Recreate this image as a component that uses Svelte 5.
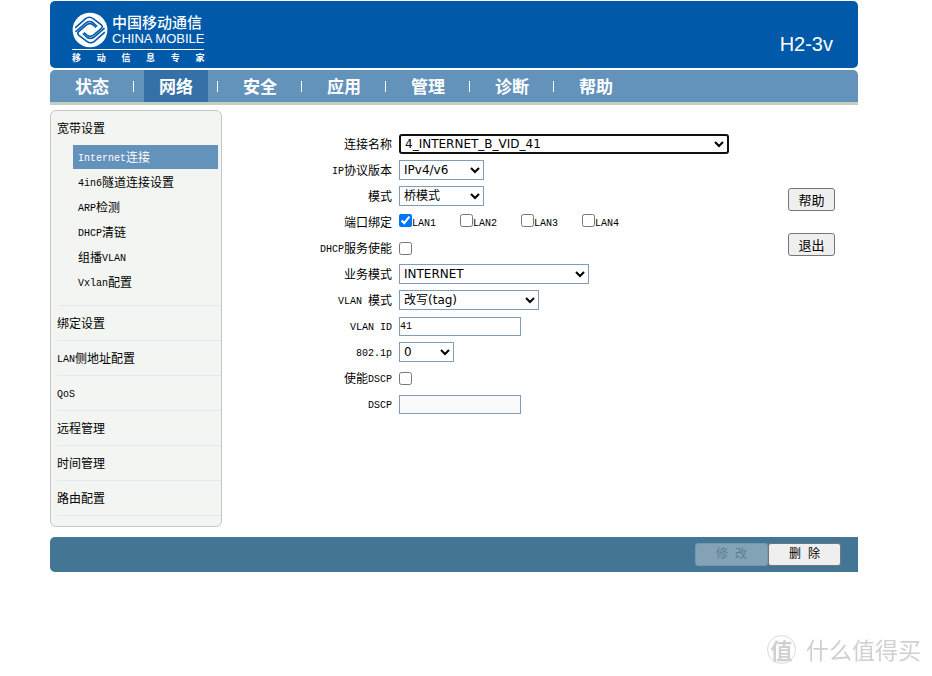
<script lang="ts">
  const tabs = ["状态", "网络", "安全", "应用", "管理", "诊断", "帮助"];
  let activeTab = $state("网络");

  const links = ["Internet连接", "4in6隧道连接设置", "ARP检测", "DHCP清链", "组播VLAN", "Vxlan配置"];
  let activeLink = $state("Internet连接");

  const sections = ["绑定设置", "LAN侧地址配置", "QoS", "远程管理", "时间管理", "路由配置"];

  let ports = $state([
    { name: "LAN1", bound: true },
    { name: "LAN2", bound: false },
    { name: "LAN3", bound: false },
    { name: "LAN4", bound: false },
  ]);
  let dhcp = $state(false);
  let dscpEnabled = $state(false);
  let vlanId = $state("41");

  // latin runs are set in the half width face
  const split = (value: string) => value.match(/[\x20-\x7e]+|[^\x20-\x7e]+/g) ?? [];
  const isLatin = (value: string) => /^[\x20-\x7e]/.test(value);
</script>

{#snippet mixed(value: string)}{#each split(value) as part}{#if isLatin(part)}<span class="latin">{part}</span>{:else}{part}{/if}{/each}{/snippet}

{#snippet wave()}
  <path d="M10 50 43 21Q55 12 67 21L93 41Q99 47 93 52L68 73Q57 81 47 73L38 65" />
  <path d="M11 63 45 34Q56 26 67 34L80 46" />
{/snippet}

<div class="page">
  <header>
    <div class="logo">
      <svg class="emblem" viewBox="0 0 114 114" aria-hidden="true">
        <circle cx="57" cy="57" r="55" fill="#fff" />
        <g fill="none" stroke="#0059a9" stroke-width="5">
          {@render wave()}
          <g transform="rotate(180 57 57)">
            {@render wave()}
          </g>
        </g>
      </svg>
      <div class="brand">
        <strong>中国移动通信</strong>
        <span>CHINA MOBILE</span>
      </div>
      <div class="slogan">
        {#each "移动信息专家" as char}<span>{char}</span>{/each}
      </div>
    </div>
    <div class="model">H2-3v</div>
  </header>

  <nav class="tabs">
    {#each tabs as tab}
      <a href="#{tab}" class:active={tab === activeTab} onclick={() => (activeTab = tab)}>{tab}</a>
    {/each}
  </nav>

  <div class="content">
    <aside class="menu">
      <h2>宽带设置</h2>
      <ul>
        {#each links as link}
          <li>
            <a href="#{link}" class:active={link === activeLink} onclick={() => (activeLink = link)}>{@render mixed(link)}</a>
          </li>
        {/each}
      </ul>
      {#each sections as section}
        <a class="section" href="#{section}">{@render mixed(section)}</a>
      {/each}
    </aside>

    <form>
      <label for="connection">连接名称</label>
      <select id="connection" class="current">
        <option>4_INTERNET_B_VID_41</option>
      </select>

      <label for="ip">{@render mixed("IP协议版本")}</label>
      <select id="ip" class="small">
        <option>IPv4/v6</option>
      </select>

      <label for="mode">模式</label>
      <select id="mode" class="small">
        <option>桥模式</option>
      </select>

      <span class="label">端口绑定</span>
      <div class="ports">
        {#each ports as port}
          <label><input type="checkbox" bind:checked={port.bound} /><span class="latin">{port.name}</span></label>
        {/each}
      </div>

      <label for="dhcp">{@render mixed("DHCP服务使能")}</label>
      <input id="dhcp" type="checkbox" bind:checked={dhcp} />

      <label for="service">业务模式</label>
      <select id="service" class="large">
        <option>INTERNET</option>
      </select>

      <label for="vlan-mode">{@render mixed("VLAN 模式")}</label>
      <select id="vlan-mode" class="medium">
        <option>改写(tag)</option>
      </select>

      <label for="vlan-id">{@render mixed("VLAN ID")}</label>
      <input id="vlan-id" type="text" bind:value={vlanId} />

      <label for="priority">{@render mixed("802.1p")}</label>
      <select id="priority" class="tiny">
        <option>0</option>
      </select>

      <label for="dscp-enabled">{@render mixed("使能DSCP")}</label>
      <input id="dscp-enabled" type="checkbox" bind:checked={dscpEnabled} />

      <label for="dscp">{@render mixed("DSCP")}</label>
      <input id="dscp" type="text" disabled={!dscpEnabled} />
    </form>

    <div class="side">
      <button type="button">帮助</button>
      <button type="button">退出</button>
    </div>
  </div>

  <footer>
    <button type="button" disabled>修 改</button>
    <button type="button">删 除</button>
  </footer>
</div>

<div class="watermark">
  <span class="seal">值</span>
  <span>什么值得买</span>
</div>

<style>
  :global(body) {
    background: #fff;
    color: #000;
    font: 12px/16px "Noto Sans CJK SC", sans-serif;
  }

  a {
    color: inherit;
    text-decoration: none;
  }

  .page {
    margin: 0 74px 0 50px;
    padding-top: 1px;
  }

  .latin {
    font-family: "Liberation Mono", monospace;
    font-size: 10px;
    line-height: 12px;
    vertical-align: 1px;
    white-space: pre;
  }

  header {
    display: flex;
    justify-content: space-between;
    height: 67px;
    border-radius: 5px;
    background: #0059a9;
    color: #fff;
  }

  .logo {
    display: grid;
    grid-template-columns: 36px auto;
    grid-template-rows: 36px 16px;
    column-gap: 4px;
    align-content: start;
    margin: 11px 0 0 22px;
    width: 131px;
  }

  .emblem {
    width: 36px;
    height: 36px;
  }

  .brand {
    display: flex;
    flex-direction: column;
    justify-content: center;
    font-family: "Liberation Sans", "Noto Sans CJK SC", sans-serif;
    white-space: nowrap;
  }

  .brand strong {
    font-size: 15px;
    font-weight: 500;
    line-height: 17px;
  }

  .brand span {
    font-size: 13px;
    line-height: 15px;
  }

  .slogan {
    grid-column: 1 / 3;
    display: flex;
    justify-content: space-between;
    border-top: 1px solid #fff;
    margin-top: 1px;
    font-size: 9px;
    font-weight: bold;
    line-height: 16px;
  }

  .model {
    margin: 31px 25px 0 0;
    font-family: "Liberation Sans", sans-serif;
    font-size: 20px;
    line-height: 24px;
  }

  .tabs {
    display: flex;
    gap: 20px;
    height: 32px;
    margin-top: 2px;
    padding-left: 10px;
    border-bottom: 3px solid #c5cdc5;
    border-radius: 5px 5px 0 0;
    background: #6392bb;
    color: #fff;
  }

  .tabs a {
    position: relative;
    width: 64px;
    font-size: 17px;
    font-weight: bold;
    line-height: 32px;
    text-align: center;
  }

  .tabs a.active {
    background: #3570a6;
  }

  .tabs a:not(:last-child)::after {
    content: "";
    position: absolute;
    top: 11px;
    right: -10px;
    width: 1px;
    height: 11px;
    background: #fff;
  }

  .content {
    display: flex;
    align-items: flex-start;
    margin-top: 5px;
  }

  .menu {
    box-sizing: border-box;
    flex: none;
    width: 172px;
    padding: 9px 0 10px 6px;
    border: 1px solid #c6c6c6;
    border-radius: 6px;
    background: #f3f5f2;
  }

  .menu h2 {
    margin: 0;
    font-size: 12px;
    font-weight: normal;
    line-height: 16px;
  }

  .menu ul {
    margin: 0;
    padding: 9px 3px 10px 16px;
    border-bottom: 1px solid #e2e9f0;
    list-style: none;
  }

  .menu li a {
    display: block;
    height: 24px;
    margin-bottom: 1px;
    padding-left: 5px;
    line-height: 24px;
  }

  .menu li a.active {
    background: #6392bb;
    color: #fff;
  }

  .section {
    display: block;
    height: 34px;
    border-bottom: 1px solid #e2e9f0;
    line-height: 34px;
  }

  form {
    display: grid;
    grid-template-columns: 170px auto;
    grid-auto-rows: 26px;
    column-gap: 7px;
    align-items: center;
    justify-content: start;
    flex: 1;
    padding-top: 21px;
  }

  form > label,
  .label {
    text-align: right;
  }

  select,
  input[type="text"] {
    box-sizing: border-box;
    height: 20px;
    margin: 0;
    border: 1px solid #7f9db9;
    border-radius: 0;
    background-color: #fff;
    color: #000;
    font: 12px "DejaVu Sans", "Noto Sans CJK SC", sans-serif;
  }

  .current {
    width: 330px;
    border: 2px solid #101010;
    border-radius: 3px;
  }

  .small {
    width: 85px;
  }

  .large {
    width: 190px;
  }

  .medium {
    width: 140px;
  }

  .tiny {
    width: 55px;
  }

  input[type="text"] {
    width: 122px;
    height: 19px;
    padding: 0;
    font: 10px "Liberation Mono", monospace;
  }

  input[type="text"]:disabled {
    background: #fafafa;
  }

  input[type="checkbox"] {
    width: 13px;
    height: 13px;
    margin: 0;
  }

  .ports {
    display: flex;
  }

  .ports label {
    display: flex;
    align-items: flex-end;
    width: 61px;
    height: 16px;
  }

  .ports input {
    align-self: flex-start;
  }

  .side {
    display: flex;
    flex-direction: column;
    gap: 22px;
    margin: 78px 23px 0 0;
  }

  button {
    box-sizing: border-box;
    height: 23px;
    padding: 0;
    border: 1px solid #767676;
    border-radius: 3px;
    background: #efefef;
    color: #000;
    font: 13px/16px "Noto Sans CJK SC", sans-serif;
  }

  .side button {
    width: 47px;
  }

  footer {
    display: flex;
    align-items: center;
    justify-content: flex-end;
    height: 35px;
    margin-top: 10px;
    padding-right: 17px;
    border-radius: 5px 0 0 5px;
    background: #437594;
  }

  footer button {
    width: 73px;
    font: 12px/16px "Liberation Mono", "Noto Sans CJK SC", monospace;
  }

  footer button:disabled {
    border-color: #7698ad;
    background: #84a2b5;
    color: #5c7f94;
  }

  .watermark {
    position: fixed;
    right: 11px;
    bottom: 12px;
    display: flex;
    align-items: center;
    gap: 10px;
    color: #d0d0d0;
    font: 23px/30px "Noto Sans CJK SC", sans-serif;
  }

  .seal {
    box-sizing: border-box;
    width: 29px;
    height: 29px;
    border: 1px solid #d8d8d8;
    border-radius: 50%;
    font-size: 22px;
    font-weight: bold;
    line-height: 26px;
    text-align: center;
  }
</style>
